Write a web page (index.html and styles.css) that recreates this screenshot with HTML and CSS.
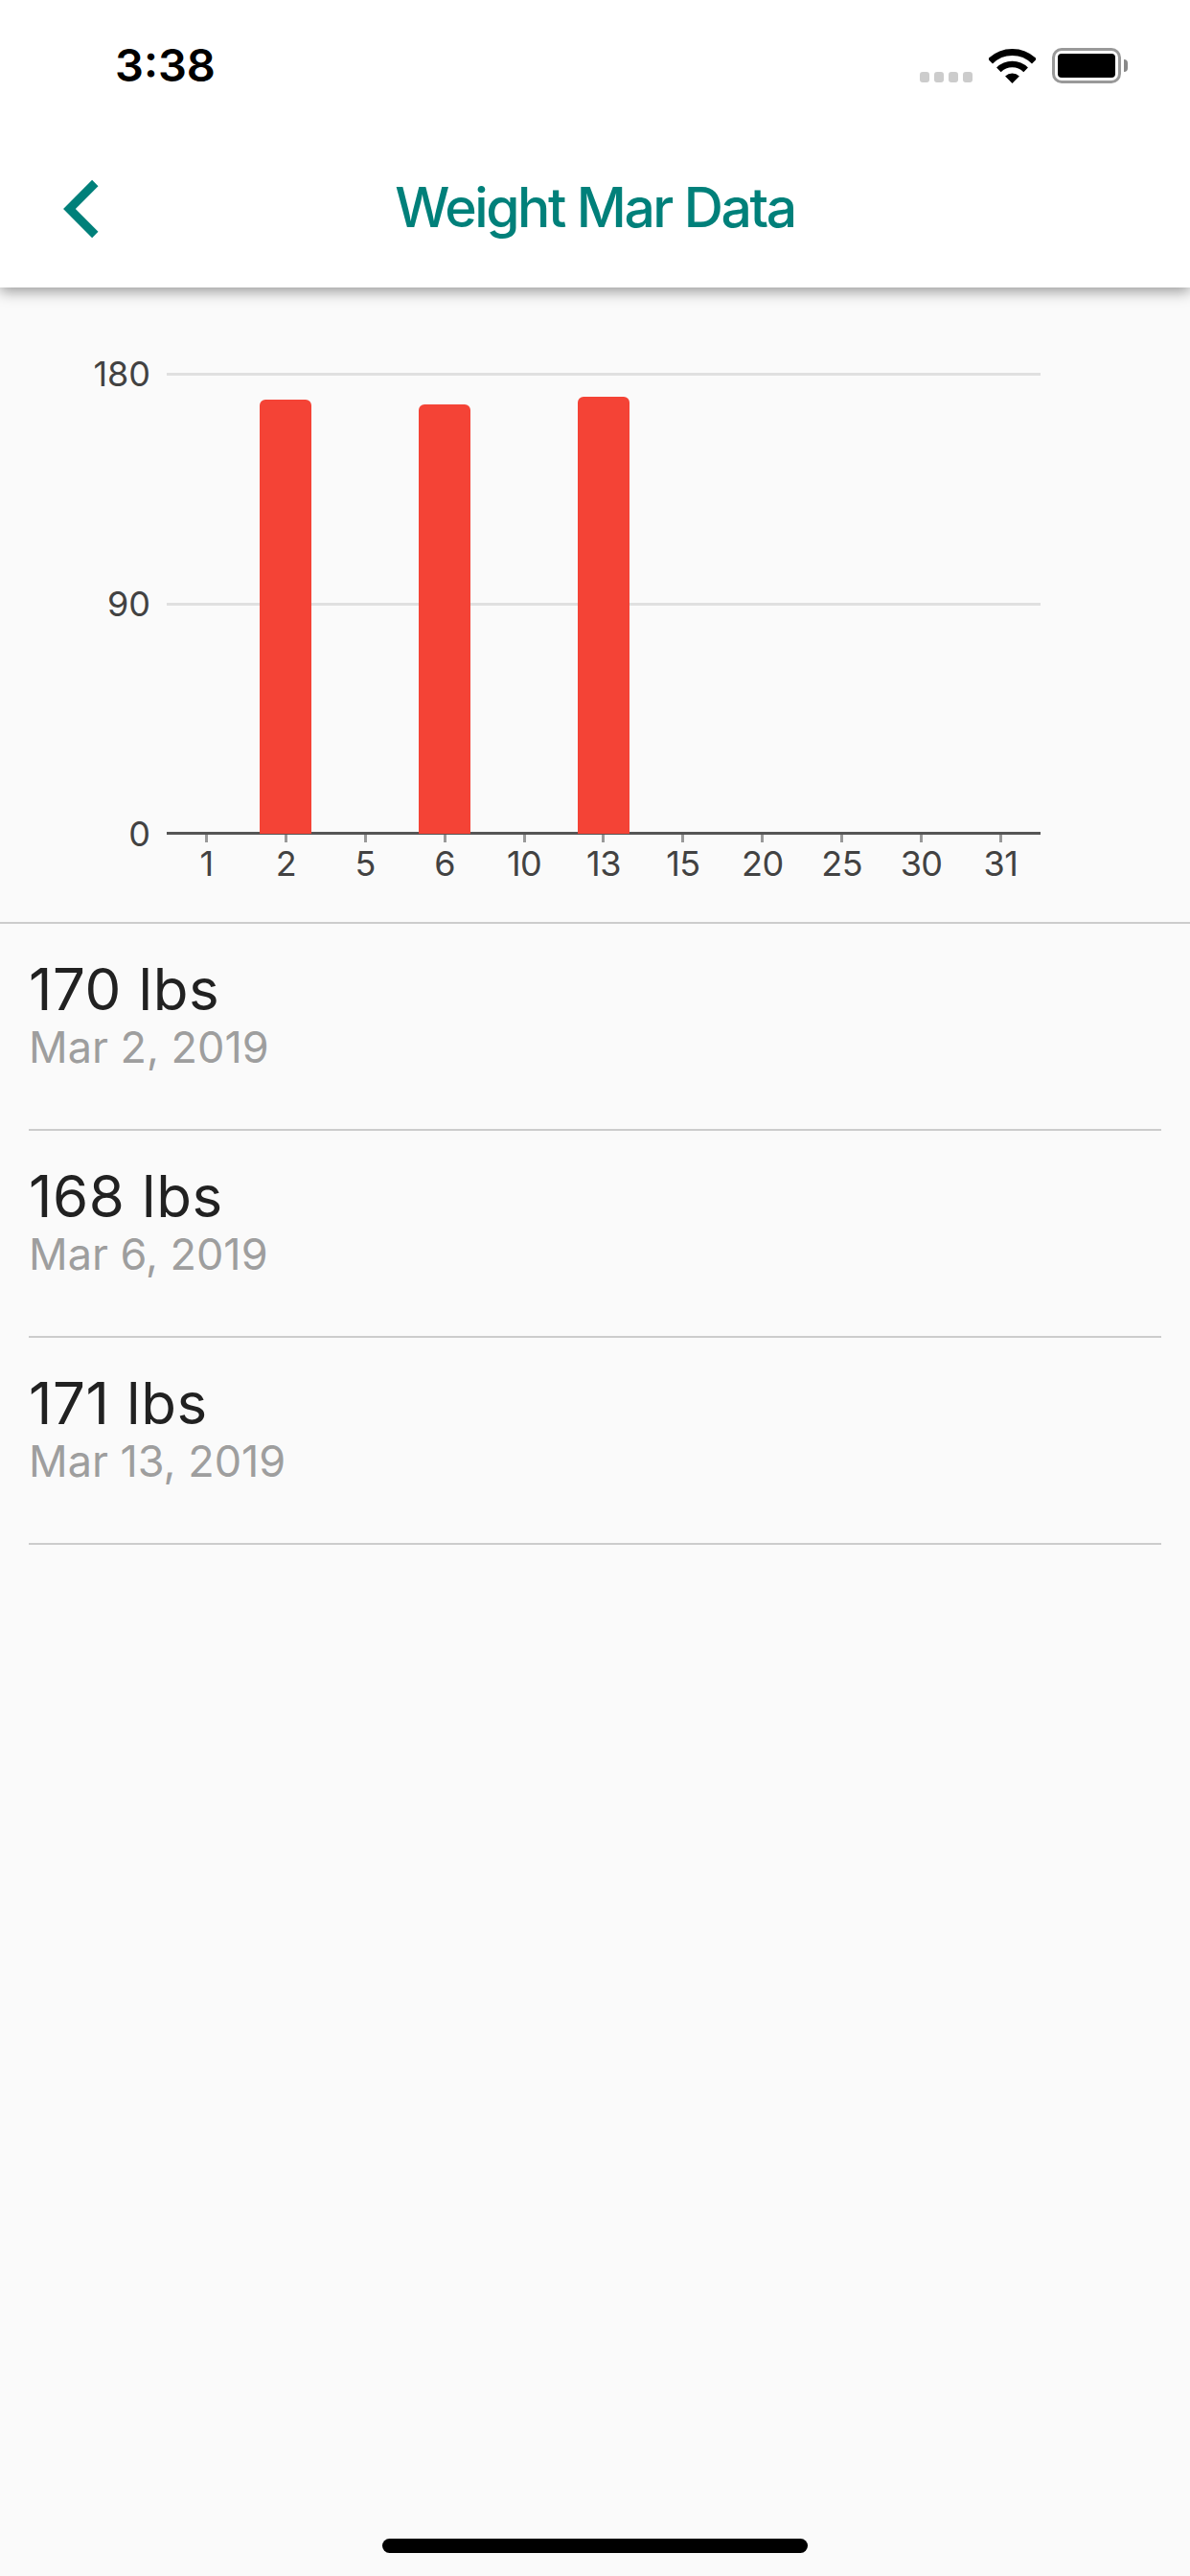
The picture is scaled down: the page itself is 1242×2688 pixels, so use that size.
FILE: index.html
```html
<!DOCTYPE html>
<html lang="en">
<head>
    <meta charset="UTF-8">
    <meta name="viewport" content="width=device-width, initial-scale=1.0">
    <title>Weight Mar Data</title>
    <link rel="stylesheet" href="styles.css">
</head>
<body>
    <div class="screen">
        <header class="top">
            <div class="status">
                <span class="time">3:38</span>
                <div class="status-icons">
                    <div class="signal"><i></i><i></i><i></i><i></i></div>
                    <svg class="wifi" width="49" height="36" viewBox="0 0 49 36">
                        <path d="M1.52 13.02A32.5 32.5 0 0 1 47.48 13.02" fill="none" stroke="#000" stroke-width="7"/>
                        <path d="M10.36 21.86A20 20 0 0 1 38.64 21.86" fill="none" stroke="#000" stroke-width="6.5"/>
                        <path d="M24.5 36L17.1 28.6A10.5 10.5 0 0 1 31.9 28.6Z" fill="#000"/>
                    </svg>
                    <div class="battery">
                        <div class="battery-body"><div class="battery-level"></div></div>
                        <div class="battery-nub"></div>
                    </div>
                </div>
            </div>
            <nav class="nav">
                <svg class="back" width="48" height="72" viewBox="0 0 48 72">
                    <polyline points="39.3,9 12.4,36 39.3,63" fill="none" stroke="#00807a" stroke-width="9"/>
                </svg>
                <h1 class="title">Weight Mar Data</h1>
                <div></div>
            </nav>
        </header>

        <section class="chart">
            <div class="y-axis">
                <span>180</span>
                <span>90</span>
                <span>0</span>
            </div>
            <div class="chart-main">
                <div class="plot">
                    <div class="col"></div>
                    <div class="col"><div class="bar" style="height: 94.44%"></div></div>
                    <div class="col"></div>
                    <div class="col"><div class="bar" style="height: 93.33%"></div></div>
                    <div class="col"></div>
                    <div class="col"><div class="bar" style="height: 95%"></div></div>
                    <div class="col"></div>
                    <div class="col"></div>
                    <div class="col"></div>
                    <div class="col"></div>
                    <div class="col"></div>
                </div>
                <div class="x-axis">
                    <span>1</span>
                    <span>2</span>
                    <span>5</span>
                    <span>6</span>
                    <span>10</span>
                    <span>13</span>
                    <span>15</span>
                    <span>20</span>
                    <span>25</span>
                    <span>30</span>
                    <span>31</span>
                </div>
            </div>
        </section>

        <ul class="list">
            <li class="row">
                <div class="weight">170 lbs</div>
                <div class="date">Mar 2, 2019</div>
            </li>
            <li class="row">
                <div class="weight">168 lbs</div>
                <div class="date">Mar 6, 2019</div>
            </li>
            <li class="row">
                <div class="weight">171 lbs</div>
                <div class="date">Mar 13, 2019</div>
            </li>
        </ul>

        <div class="home-bar"></div>
    </div>
</body>
</html>
```

FILE: styles.css
```css
* {
    box-sizing: border-box;
}
html, body {
    margin: 0;
    padding: 0;
}
body {
    font-family: Inter, "Liberation Sans", sans-serif;
    background-color: #fafafa;
}
.screen {
    width: 1242px;
    height: 2688px;
    display: flex;
    flex-direction: column;
    overflow: hidden;
}

/* status bar + nav */
.top {
    height: 300px;
    flex: none;
    background: white;
    box-shadow: 0 4px 14px rgba(0,0,0,0.4);
    position: relative;
}
.status {
    height: 136px;
    padding: 0 65px 0 120px;
    display: flex;
    justify-content: space-between;
    align-items: center;
}
.time {
    font-size: 47px;
    font-weight: 600;
    color: #000;
    line-height: 56px;
}
.status-icons {
    display: flex;
    align-items: flex-end;
    gap: 17px;
}
.signal {
    display: flex;
    gap: 5px;
    margin-bottom: 1px;
}
.signal i {
    display: block;
    width: 10px;
    height: 11px;
    border-radius: 3px;
    background: #ccc;
}
.wifi {
    display: block;
}
.battery {
    display: flex;
    align-items: center;
    gap: 3px;
}
.battery-body {
    width: 72px;
    height: 37px;
    padding: 3px;
    border: 3px solid #999;
    border-radius: 10px;
}
.battery-level {
    height: 100%;
    background: #000;
    border-radius: 4px;
}
.battery-nub {
    width: 4px;
    height: 13px;
    background: #888;
    border-radius: 0 4px 4px 0;
}
.nav {
    height: 160px;
    padding: 0 60px;
    display: grid;
    grid-template-columns: 1fr auto 1fr;
    align-items: center;
}
.back {
    display: block;
    margin-top: 4px;
}
.title {
    margin: 0;
    font-size: 57px;
    font-weight: 500;
    color: #00807a;
    letter-spacing: -2.4px;
}

/* chart */
.chart {
    height: 664px;
    flex: none;
    padding-top: 69px;
    display: flex;
    align-items: flex-start;
    border-bottom: 2px solid #ccc;
}
.y-axis {
    width: 157px;
    height: 522px;
    display: flex;
    flex-direction: column;
    justify-content: space-between;
    align-items: flex-end;
    font-size: 36px;
    line-height: 42px;
    color: #424242;
}
.chart-main {
    width: 912px;
    margin-left: 17px;
    margin-top: 20px;
}
.plot {
    height: 481px;
    padding-top: 1px;
    display: flex;
    background:
        linear-gradient(#e0e0e0, #e0e0e0) 0 0 / 100% 3px no-repeat,
        linear-gradient(#e0e0e0, #e0e0e0) 0 240px / 100% 3px no-repeat;
}
.col {
    flex: 1;
    display: flex;
    align-items: flex-end;
    justify-content: center;
}
.bar {
    width: 54px;
    background: #f44336;
    border-radius: 6px 6px 0 0;
    position: relative;
}
.x-axis {
    margin-top: -2px;
    border-top: 3px solid #555;
    display: flex;
}
.x-axis span {
    flex: 1;
    display: flex;
    flex-direction: column;
    align-items: center;
    font-size: 36px;
    line-height: 42px;
    color: #424242;
    letter-spacing: -0.5px;
}
.x-axis span::before {
    content: "";
    width: 3px;
    height: 8px;
    background: #999;
    margin-bottom: 1px;
}

/* list of entries */
.list {
    list-style: none;
    margin: 0;
    padding: 0 30px;
}
.row {
    height: 216px;
    padding-top: 32px;
    border-bottom: 2px solid #ccc;
}
.weight {
    font-size: 60px;
    line-height: 72px;
    letter-spacing: 0.6px;
    color: #212121;
}
.date {
    font-size: 45px;
    line-height: 50px;
    color: #9e9e9e;
}

.home-bar {
    width: 444px;
    height: 15px;
    margin: auto auto 24px;
    background: #000;
    border-radius: 8px;
}
```
